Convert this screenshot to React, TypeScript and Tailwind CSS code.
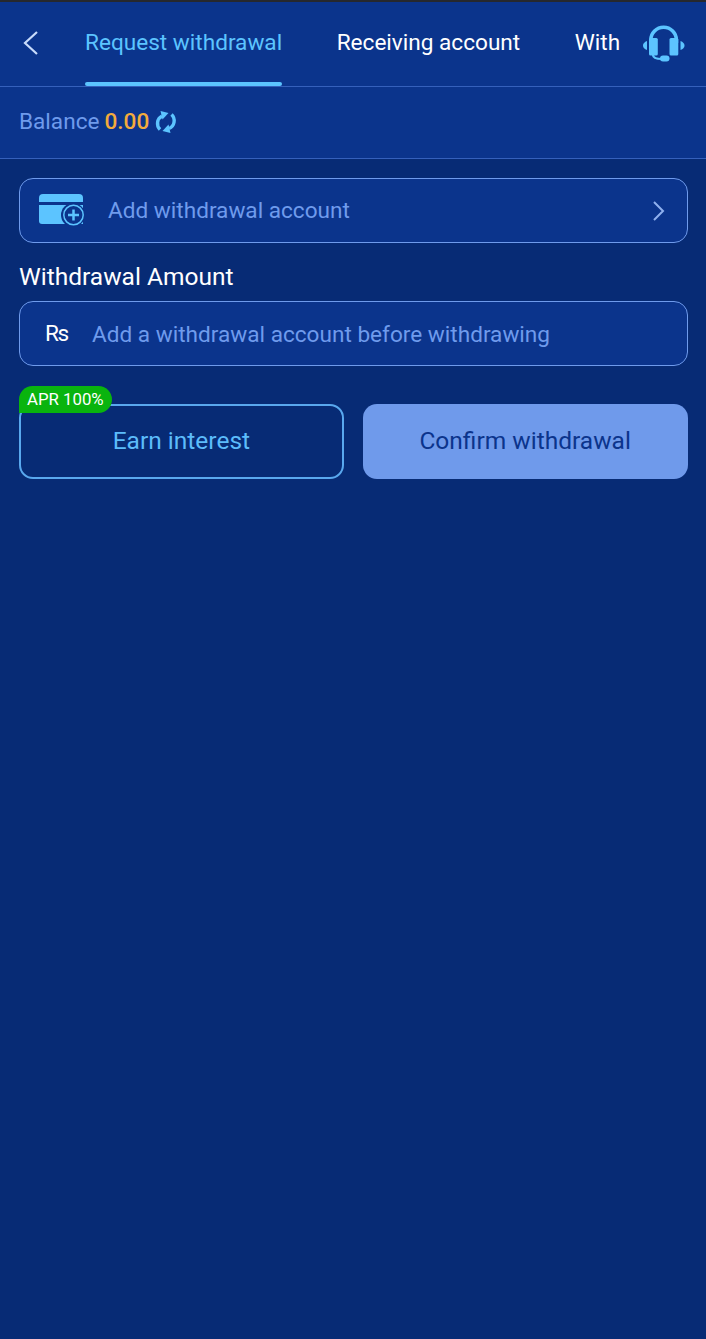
import React from "react";

const font = "font-['Roboto','Liberation_Sans',sans-serif]";

const RefreshIcon = () => (
    <svg width="23" height="24" viewBox="0 0 23 24" fill="none" className="shrink-0">
        <path d="M8 6 A8.500 8.500 0 0 0 6 19.500" stroke="#5cc4ff" strokeWidth="3.400" />
        <path d="M15 18.500 A8.500 8.500 0 0 0 17.500 4.500" stroke="#5cc4ff" strokeWidth="3.400" />
        <path d="M6.500 1 L14.500 3 L8.500 9.500 Z" fill="#5cc4ff" />
        <path d="M16.500 23 L8.500 21 L14.500 14.500 Z" fill="#5cc4ff" />
    </svg>
);

const CardPlusIcon = () => (
    <svg width="46" height="33" viewBox="0 0 46 33" className="shrink-0">
        <path d="M0 8V4a4 4 0 0 1 4-4h36a4 4 0 0 1 4 4v4Z" fill="#5cc4ff" />
        <path d="M0 11h44v19H3a3 3 0 0 1-3-3Z" fill="#5cc4ff" />
        <circle cx="34" cy="21" r="12" fill="#0b348c" />
        <circle cx="34.500" cy="21" r="9.700" fill="none" stroke="#5cc4ff" strokeWidth="1.500" />
        <path d="M34.500 15.500v11M29 21h11" stroke="#5cc4ff" strokeWidth="2.500" />
    </svg>
);

const HeadsetIcon = () => (
    <svg width="42" height="37" viewBox="0 0 42 37" fill="none" className="shrink-0">
        <path d="M7.800 18V15a12.800 12.800 0 0 1 25.600 0v3" stroke="#5cc4ff" strokeWidth="3.600" />
        <rect x="6" y="13" width="8.800" height="17.500" rx="1.500" fill="#5cc4ff" />
        <rect x="26.500" y="13" width="8.800" height="17.500" rx="1.500" fill="#5cc4ff" />
        <path d="M4 16v9C1.500 24 0 22.500 0 20.500S1.500 17 4 16Z" fill="#5cc4ff" />
        <path d="M37.500 16v9c2.500-1 4-2.500 4-4.500S40 17 37.500 16Z" fill="#5cc4ff" />
        <path d="M10 30c0 3 4 4 9 4" stroke="#5cc4ff" strokeWidth="2.200" />
        <rect x="17" y="30.500" width="9.500" height="6" rx="3" fill="#5cc4ff" />
    </svg>
);

export default function App() {
    return (
        <div className={`${font} min-h-[1339px] w-full bg-[#072b75] flex flex-col`}>
            <div className="h-0.5 bg-[#26282e]" />

            <div className="h-[85px] flex items-stretch bg-[#0b348c] border-b border-[#3560bb]">
                <div className="w-[85px] shrink-0 flex items-center pl-[22px] pb-[3px]">
                    <svg width="18" height="26" viewBox="0 0 18 26" fill="none">
                        <path d="M15 2 L3 13 L15 24" stroke="#c8dbfb" strokeWidth="2.200" />
                    </svg>
                </div>
                <div className="w-[535px] shrink-0 overflow-hidden flex gap-[54.500px] text-[22.600px] whitespace-nowrap">
                    <div className="relative flex items-center pb-[3px] text-[#5cc4ff]">
                        Request withdrawal
                        <span className="absolute left-0 right-0 bottom-0 h-1 rounded-full bg-[#5cc4ff]" />
                    </div>
                    <div className="flex items-center pb-[3px] text-white">Receiving account</div>
                    <div className="flex items-center pb-[3px] text-white">Withdrawal record</div>
                </div>
                <div className="flex items-center pl-[23px] pb-[1px]">
                    <HeadsetIcon />
                </div>
            </div>

            <div className="h-[72px] flex items-center px-[19px] pb-[1px] bg-[#0b348c] border-b border-[#3560bb] text-[22.600px]">
                <span className="text-[#6f9bec]">Balance</span>
                <span className="ml-[5px] text-[#f2ab3c] font-medium">0.00</span>
                <span className="ml-[5px] flex">
                    <RefreshIcon />
                </span>
            </div>

            <div className="flex flex-col pl-[19px] pr-[18.500px] pt-[19px]">
                <div className="h-[65px] flex items-center pl-[19px] pr-[21px] rounded-[14px] border border-[#6f9bec] bg-[#0b348c]">
                    <CardPlusIcon />
                    <span className="ml-[23px] flex-1 text-[22.600px] text-[#6f9bec]">Add withdrawal account</span>
                    <svg width="15" height="22" viewBox="0 0 15 22" fill="none">
                        <path d="M3 2 L12 11 L3 20" stroke="#8fb0ee" strokeWidth="2" />
                    </svg>
                </div>

                <div className="mt-[17px] text-[24.500px] leading-[34px] text-white">Withdrawal Amount</div>

                <div className="mt-[7px] h-[65px] flex items-center pl-[25px] rounded-[14px] border border-[#6f9bec] bg-[#0b348c]">
                    <span className="w-[47px] text-[22.600px] tracking-[-1.500px] text-white">Rs</span>
                    <span className="pt-[3px] text-[22.600px] text-[#6f9bec]">Add a withdrawal account before withdrawing</span>
                </div>

                <div className="mt-[38px] grid grid-cols-2 gap-[19px]">
                    <div className="relative h-[75px] flex items-center justify-center rounded-[14px] border-2 border-[#59a8ee] text-[24.500px] text-[#5cbcfb]">
                        Earn interest
                        <span className="absolute -left-[2px] -top-[20px] h-[27px] px-[8px] flex items-center rounded-t-[14px] rounded-br-[14px] bg-[#09b40e] text-[16.800px] text-white">
                            APR 100%
                        </span>
                    </div>
                    <div className="h-[75px] flex items-center justify-center rounded-[14px] bg-[#6f9aeb] text-[24.500px] text-[#0b348c]">
                        Confirm withdrawal
                    </div>
                </div>
            </div>
        </div>
    );
}
